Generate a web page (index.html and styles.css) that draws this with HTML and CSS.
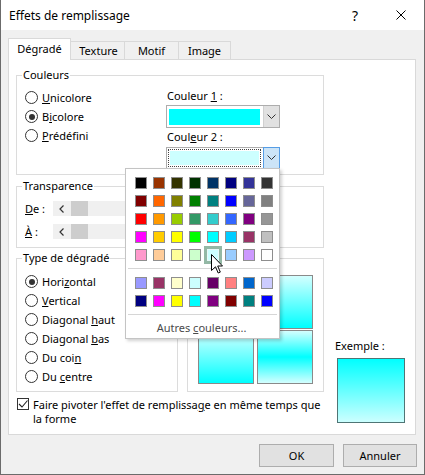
FILE: index.html
```html
<!DOCTYPE html>
<html lang="fr">
<head>
<meta charset="utf-8">
<title>Effets de remplissage</title>
<link rel="stylesheet" href="styles.css">
</head>
<body>
<div class="win">
  <div class="titlebar">
    <span class="title">Effets de remplissage</span>
    <span class="tbtn help">?</span>
    <span class="tbtn close"><svg width="10" height="10" viewBox="0 0 10 10"><path d="M0.5 0.5L9.5 9.5M9.5 0.5L0.5 9.5" stroke="#000" stroke-width="1"/></svg></span>
  </div>
  <div class="tabs">
    <div class="tab active">Dégradé</div>
    <div class="tab t-texture">Texture</div>
    <div class="tab t-motif">Motif</div>
    <div class="tab t-image">Image</div>
  </div>
  <div class="panel">
    <div class="group g-colors">
      <div class="gtitle">Couleurs</div>
      <div class="colors-body">
        <div class="radios">
          <div class="radio"><span class="rb"></span><span><u>U</u>nicolore</span></div>
          <div class="radio"><span class="rb on"></span><span>B<u>i</u>colore</span></div>
          <div class="radio"><span class="rb"></span><span><u>P</u>rédéfini</span></div>
        </div>
        <div class="combos">
          <div class="lbl">Couleur <u>1</u> :</div>
          <div class="combo">
            <span class="swarea"><span class="sw c1"></span></span>
            <span class="dd"><svg width="9" height="6" viewBox="0 0 9 6"><path d="M0.5 0.5L4.5 4.5L8.5 0.5" fill="none" stroke="#333" stroke-width="1"/></svg></span>
          </div>
          <div class="lbl lbl2">Coul<u>e</u>ur 2 :</div>
          <div class="combo focus">
            <span class="swarea"><span class="ring"><span class="sw c2"></span></span></span>
            <span class="dd"><svg width="9" height="6" viewBox="0 0 9 6"><path d="M0.5 0.5L4.5 4.5L8.5 0.5" fill="none" stroke="#333" stroke-width="1"/></svg></span>
            <div class="popup">
              <div class="pal">
                <i style="background:#000000"></i><i style="background:#993300"></i><i style="background:#333300"></i><i style="background:#003300"></i><i style="background:#003366"></i><i style="background:#000080"></i><i style="background:#333399"></i><i style="background:#333333"></i>
                <i style="background:#800000"></i><i style="background:#FF6600"></i><i style="background:#808000"></i><i style="background:#008000"></i><i style="background:#008080"></i><i style="background:#0000FF"></i><i style="background:#666699"></i><i style="background:#808080"></i>
                <i style="background:#FF0000"></i><i style="background:#FF9900"></i><i style="background:#99CC00"></i><i style="background:#339966"></i><i style="background:#33CCCC"></i><i style="background:#3366FF"></i><i style="background:#800080"></i><i style="background:#969696"></i>
                <i style="background:#FF00FF"></i><i style="background:#FFCC00"></i><i style="background:#FFFF00"></i><i style="background:#00FF00"></i><i style="background:#00FFFF"></i><i style="background:#00CCFF"></i><i style="background:#993366"></i><i style="background:#C0C0C0"></i>
                <i style="background:#FF99CC"></i><i style="background:#FFCC99"></i><i style="background:#FFFF99"></i><i style="background:#CCFFCC"></i><i class="hot" style="background:#CCFFFF"><svg class="cursor" width="13" height="20" viewBox="0 0 13 20"><path d="M0.5 0.5L0.5 16.5L4.5 12.8L7.2 19L9.3 18.1L6.7 12L11.5 12Z" fill="#fff" stroke="#000" stroke-width="1" stroke-linejoin="round"/></svg></i><i style="background:#99CCFF"></i><i style="background:#CC99FF"></i><i style="background:#FFFFFF"></i>
              </div>
              <div class="psep"></div>
              <div class="pal pal2">
                <i style="background:#9999FF"></i><i style="background:#993366"></i><i style="background:#FFFFCC"></i><i style="background:#CCFFFF"></i><i style="background:#660066"></i><i style="background:#FF8080"></i><i style="background:#0066CC"></i><i style="background:#CCCCFF"></i>
                <i style="background:#000080"></i><i style="background:#FF00FF"></i><i style="background:#FFFF00"></i><i style="background:#00FFFF"></i><i style="background:#800080"></i><i style="background:#800000"></i><i style="background:#008080"></i><i style="background:#0000FF"></i>
              </div>
              <div class="psep"></div>
              <div class="more">Autres <u>c</u>ouleurs...</div>
            </div>
          </div>
        </div>
      </div>
    </div>

    <div class="group g-trans">
      <div class="gtitle">Transparence</div>
      <div class="trow"><span class="tl"><u>D</u>e :</span><span class="sb"><span class="sba"><svg width="5" height="8" viewBox="0 0 5 8"><path d="M4.5 0.5L1 4L4.5 7.5" fill="none" stroke="#333" stroke-width="1.2"/></svg></span><span class="thumb"></span></span></div>
      <div class="trow"><span class="tl"><u>À</u> :</span><span class="sb"><span class="sba"><svg width="5" height="8" viewBox="0 0 5 8"><path d="M4.5 0.5L1 4L4.5 7.5" fill="none" stroke="#333" stroke-width="1.2"/></svg></span><span class="thumb"></span></span></div>
    </div>

    <div class="lower">
      <div class="group g-type">
        <div class="gtitle">Type de dégradé</div>
        <div class="radios2">
          <div class="radio"><span class="rb on"></span><span>Hori<u>z</u>ontal</span></div>
          <div class="radio"><span class="rb"></span><span><u>V</u>ertical</span></div>
          <div class="radio"><span class="rb"></span><span>Diagonal <u>h</u>aut</span></div>
          <div class="radio"><span class="rb"></span><span>Diagonal <u>b</u>as</span></div>
          <div class="radio"><span class="rb"></span><span>Du coi<u>n</u></span></div>
          <div class="radio"><span class="rb"></span><span>Du <u>c</u>entre</span></div>
        </div>
      </div>
      <div class="group g-var">
        <div class="gtitle">Variantes</div>
        <div class="vgrid">
          <div class="v v1"></div>
          <div class="v v2"></div>
          <div class="v v3"></div>
          <div class="v v4"></div>
        </div>
      </div>
      <div class="example">
        <div class="exlbl">Exemple :</div>
        <div class="exbox"></div>
      </div>
      <div class="check">
        <span class="cb"><svg width="10" height="10" viewBox="0 0 10 10"><path d="M1 5L4 8L9.5 1.5" fill="none" stroke="#222" stroke-width="1.1"/></svg></span>
        <span class="cbt">Faire pivoter l'effet de remplissa<u>g</u>e en même temps que<br>la forme</span>
      </div>
    </div>
  </div>
  <div class="footer">
    <button class="btn ok">OK</button>
    <button class="btn cancel">Annuler</button>
  </div>
</div>
</body>
</html>
```

FILE: styles.css
```css
* { box-sizing: border-box; }
html, body { margin: 0; padding: 0; background: #fff; }
body {
  font-family: "Noto Sans", "Open Sans", sans-serif;
  font-size: 11px;
  color: #000;
}
u { text-decoration: underline; text-underline-offset: 1px; }

.win {
  width: 425px;
  height: 475px;
  border: 1px solid #6b6b6b;
  border-top: none;
  background: #f0f0f0;
  display: flex;
  flex-direction: column;
}

.titlebar {
  height: 30px;
  background: #fff;
  display: flex;
  align-items: center;
  padding-left: 8px;
  flex: none;
}
.title { flex: 1; font-size: 12px; }
.tbtn {
  width: 46px;
  height: 30px;
  display: flex;
  align-items: center;
  justify-content: center;
}
.help { font-size: 14px; }

.tabs {
  height: 29px;
  display: flex;
  align-items: flex-end;
  padding-left: 7px;
  flex: none;
}
.tab {
  height: 18px;
  border: 1px solid #d9d9d9;
  border-bottom: none;
  margin-left: -1px;
  display: flex;
  align-items: center;
  justify-content: center;
  background: #f0f0f0;
}
.tab.active {
  margin-left: 0;
  width: 63px;
  height: 22px;
  margin-bottom: -1px;
  background: #fff;
  position: relative;
  z-index: 1;
  padding-bottom: 2px;
}
.t-texture { width: 55px; padding-left: 2px; }
.t-motif { width: 55px; }
.t-image { width: 53px; }

.panel {
  margin-left: 7px;
  width: 408px;
  height: 376px;
  border: 1px solid #d9d9d9;
  background: #fff;
  flex: none;
}

.group {
  border: 1px solid #dcdcdc;
  background: #fff;
}
.gtitle {
  display: table;
  margin: -9px 0 0 5px;
  padding: 0 1px;
  line-height: 16px;
  background: #fff;
}

.g-colors {
  margin: 15px 0 0 7px;
  width: 308px;
  height: 100px;
}
.colors-body { display: flex; }
.radios { width: 149px; margin-top: 5px; }
.radio {
  display: flex;
  align-items: center;
  height: 19px;
  padding-left: 8px;
}
.rb {
  width: 13px;
  height: 13px;
  border: 1px solid #333;
  border-radius: 50%;
  background: #fff;
  margin-right: 4px;
  flex: none;
  display: flex;
  align-items: center;
  justify-content: center;
}
.rb.on::after {
  content: "";
  width: 6px;
  height: 6px;
  border-radius: 50%;
  background: #333;
}

.combos { width: 114px; margin-top: 5px; }
.lbl { line-height: 16px; padding-left: 1px; }
.lbl2 { margin-top: 1px; }
.combo {
  margin-top: 1px;
  height: 23px;
  border: 1px solid #adadad;
  background: #fff;
  display: flex;
  position: relative;
}
.combo.focus { height: 22px; margin-top: 2px; }
.swarea { flex: 1; padding: 3px 3px 2px 2px; display: flex; }
.sw { flex: 1; display: block; }
.c1 { background: #00ffff; }
.c2 { background: #ccffff; }
.ring {
  flex: 1;
  display: flex;
  border: 1px dotted #444;
  padding: 1px;
}
.combo.focus .swarea { padding: 1px 2px 1px 1px; }
.dd {
  width: 16px;
  background: #e1e1e1;
  display: flex;
  align-items: center;
  justify-content: center;
  border-left: 1px solid #d0d0d0;
}
.combo.focus .dd {
  background: #cce4f7;
  border: 1px solid #569de5;
  margin: -1px -1px -1px 0;
  width: 17px;
}

.popup {
  position: absolute;
  top: 100%;
  right: -1px;
  width: 155px;
  height: 171px;
  background: #fff;
  border: 1px solid #c4c4c4;
  box-shadow: 2px 2px 3px rgba(0, 0, 0, 0.18);
  z-index: 10;
  padding-top: 8px;
}
.pal {
  display: grid;
  grid-template-columns: repeat(8, 12px);
  grid-auto-rows: 12px;
  gap: 6px;
  margin-left: 9px;
}
.pal i {
  display: block;
  border: 1px solid #8e8e8e;
  position: relative;
}
.pal i.hot {
  outline: 3px solid #93b8a5;
  border-color: #e8f8f8;
}
.cursor {
  position: absolute;
  left: 3px;
  top: 4px;
  z-index: 2;
}
.psep {
  height: 1px;
  background: #d6d6d6;
  margin: 7px 2px 0 2px;
}
.pal2 { margin-top: 8px; }
.more {
  margin-top: 5px;
  line-height: 16px;
  text-align: center;
  color: #4a4a4a;
  padding-right: 2px;
}

.g-trans {
  margin: 11px 0 0 7px;
  width: 308px;
  height: 62px;
}
.trow {
  display: flex;
  align-items: center;
  height: 17px;
  padding-left: 8px;
  margin-top: 6px;
}
.tl { width: 28px; }
.sb {
  width: 200px;
  height: 15px;
  background: #f0f0f0;
  display: flex;
  align-items: center;
}
.sba {
  width: 17px;
  height: 15px;
  display: flex;
  align-items: center;
  justify-content: center;
}
.thumb {
  width: 17px;
  height: 15px;
  background: #cdcdcd;
  margin-left: 1px;
}

.lower {
  margin: 10px 0 0 7px;
  display: grid;
  grid-template-columns: 162px 137px auto;
  grid-template-rows: 134px auto;
  column-gap: 9px;
}
.g-type { grid-column: 1; grid-row: 1; }
.radios2 { margin-top: 6px; }
.g-var { grid-column: 2; grid-row: 1; }
.vgrid {
  margin: 9px 0 0 10px;
  display: grid;
  grid-template-columns: 56px 56px;
  grid-template-rows: 54px 54px;
  column-gap: 3px;
  row-gap: 1px;
}
.v { border: 1px solid #8a8a8a; }
.v1 { background: linear-gradient(#00ffff, #ccffff); }
.v2 { background: linear-gradient(#d4ffff, #00ffff); }
.v3 { background: linear-gradient(#d4ffff, #00ffff); }
.v4 { background: linear-gradient(#d4ffff, #00ffff 50%, #d4ffff); }

.example {
  grid-column: 3;
  grid-row: 1 / 3;
  align-self: end;
  padding-left: 2px;
  margin-bottom: 3px;
}
.exlbl { line-height: 16px; }
.exbox {
  margin: 4px 0 0 2px;
  width: 68px;
  height: 65px;
  border: 1px solid #4f7575;
  background: linear-gradient(#00ffff, #ccffff);
}

.check {
  grid-column: 1 / 3;
  grid-row: 2;
  margin-top: 6px;
  display: flex;
  align-items: flex-start;
}
.cb {
  width: 12px;
  height: 12px;
  border: 1px solid #333;
  margin: 0 4px 0 1px;
  flex: none;
  display: flex;
  align-items: center;
  justify-content: center;
  background: #fff;
}
.cbt { line-height: 14px; }

.footer {
  display: flex;
  justify-content: flex-end;
  gap: 9px;
  padding: 9px 7px 0 0;
}
.btn {
  font-family: inherit;
  font-size: 11px;
  height: 23px;
  background: #e1e1e1;
  border: 1px solid #adadad;
  border-radius: 0;
  padding: 0;
  color: #000;
}
.ok { width: 75px; }
.cancel { width: 74px; }
```
